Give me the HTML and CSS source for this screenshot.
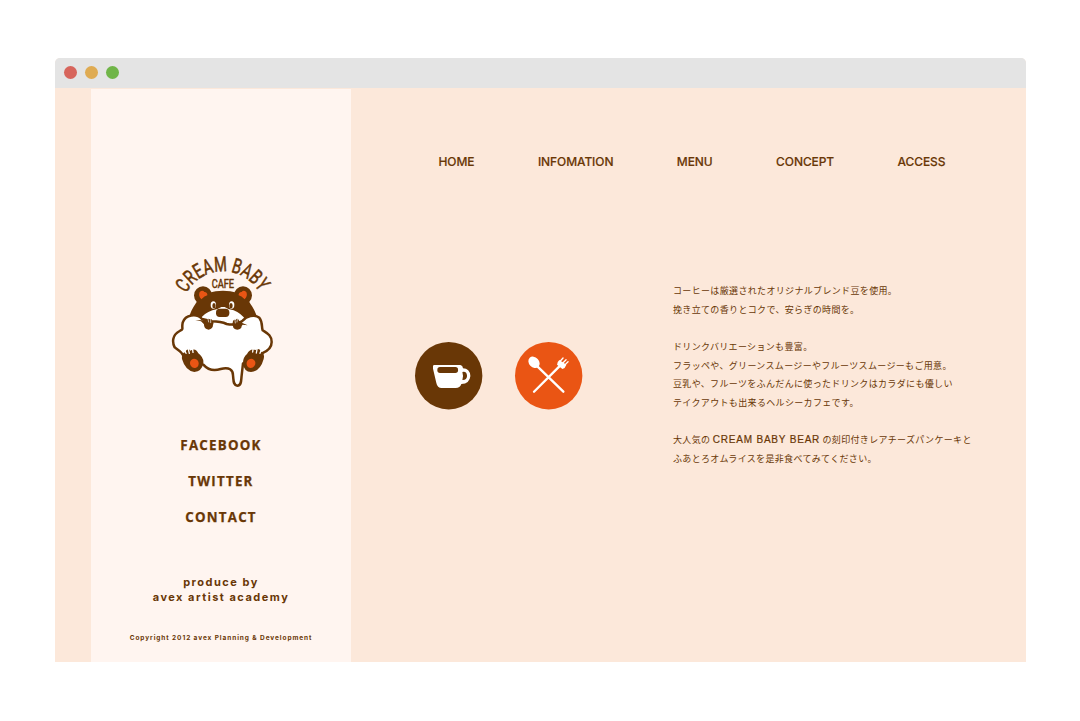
FILE: index.html
```html
<!DOCTYPE html>
<html lang="ja">
<head>
<meta charset="utf-8">
<title>CREAM BABY CAFE</title>
<link rel="stylesheet" href="styles.css">
</head>
<body>
<div class="window">
  <div class="titlebar"><i class="dot red"></i><i class="dot yellow"></i><i class="dot green"></i></div>
  <div class="page">
    <aside class="sidebar">
      <svg class="logo" viewBox="0 0 360 435" role="img" aria-label="CREAM BABY CAFE">
        <defs><path id="arc" d="M73 130A125 125 0 0 1 294 131"/></defs>
        <text class="logo-arc"><textPath href="#arc" textLength="266" lengthAdjust="spacingAndGlyphs">CREAM BABY</textPath></text>
        <text class="logo-cafe" x="149" y="115" textLength="67" lengthAdjust="spacingAndGlyphs">CAFE</text>
        <g class="brown">
          <circle cx="123" cy="136" r="27"/><circle cx="243" cy="136" r="27"/>
          <path d="M80 210C85 180 98 168 107 151C126 131 153 122 183 122C213 122 240 131 259 151C268 168 281 180 287 210L250 235H110Z"/>
        </g>
        <path class="orange" d="M113 126Q122 118 127 126Q137 127 136 136Q128 138 118 148Q108 138 113 126ZM253 126Q244 118 239 126Q229 127 230 136Q238 138 248 148Q258 138 253 126Z"/>
        <path class="white" d="M112 211Q126 189 151 181Q169 178 178 171H188Q197 178 215 181Q238 190 252 211L230 230H130Z"/>
        <path class="outline white" d="M120 207C104 189 70 194 62 218C58 240 67 235 53 243C29 256 31 278 38 292C52 302 65 310 68 330C82 340 110 340 124 344C139 361 158 363 176 357C202 350 213 360 213 376C215 391 213 406 226 407C239 407 237 391 239 376L243 340C269 331 291 324 300 310C323 301 329 290 329 276C329 255 314 249 302 241C298 233 303 217 292 203C276 191 253 199 242 212C226 227 208 225 194 222C177 214 158 214 149 214Z"/>
        <g class="white"><ellipse cx="154" cy="165" rx="8" ry="11"/><ellipse cx="209" cy="165" rx="8" ry="11"/></g>
        <g class="brown">
          <ellipse cx="156" cy="167" rx="5" ry="8"/><ellipse cx="207" cy="167" rx="5" ry="8"/>
          <rect x="162" y="176" width="40" height="25" rx="11"/>
          <path d="M100 210L122 211Q127 208 133 214Q138 202 144 209Q151 205 151 214Q157 216 153 225Q153 236 140 239Q125 237 126 223L117 214ZM257 226L241 219Q240 210 232 213Q226 201 221 210Q213 207 212 219Q208 224 213 229Q213 238 226 239Q239 238 239 228L242 224Z"/>
          <path d="M60 327Q58 309 69 307Q77 291 85 302Q101 292 109 310Q126 323 124 340Q119 365 97 366Q70 362 60 327ZM305 327Q309 310 299 307Q292 291 281 300Q264 294 255 312Q242 323 243 341Q246 365 267 366Q295 364 305 327Z"/>
        </g>
        <path class="toes" d="M66 297L72 310M78 293L82 310M91 292L93 307M299 296L294 310M286 292L283 309M274 291L272 306"/>
        <path class="toes thin" d="M138 207L140 216M146 209L146 218M226 208L225 216M219 211L220 219"/>
        <ellipse class="orange" cx="97" cy="340" rx="13" ry="14" transform="rotate(-20 97 340)"/>
        <ellipse class="orange" cx="267" cy="340" rx="13" ry="14" transform="rotate(20 267 340)"/>
      </svg>
      <nav class="social"><a>FACEBOOK</a><a>TWITTER</a><a>CONTACT</a></nav>
      <p class="producer">produce by<br>avex artist academy</p>
      <p class="copyright">Copyright 2012 avex Planning &amp; Development</p>
    </aside>
    <main class="content">
      <nav class="mainnav"><a>HOME</a><a>INFOMATION</a><a>MENU</a><a>CONCEPT</a><a>ACCESS</a></nav>
      <div class="concept">
        <div class="icons">
          <svg class="icon" viewBox="0 0 202 202">
            <circle class="brown" cx="101" cy="101" r="101"/>
            <path class="white" d="M56 69H136Q143 70 144 79Q164 79 166 102Q164 125 139 126Q135 138 122 138H80Q67 138 64 123L54 80Q53 70 56 69Z"/>
            <rect class="brown" x="67" y="75" width="62" height="18" rx="8"/>
            <path class="brown" d="M142 90Q155 87 156 102Q155 115 142 114Q146 102 142 90Z"/>
          </svg>
          <svg class="icon" viewBox="0 0 202 202">
            <circle class="orange" cx="101" cy="101" r="101"/>
            <ellipse class="white" cx="57" cy="61" rx="15" ry="19" transform="rotate(-43 57 61)"/>
            <path class="stroke" d="M64 70L145 149M57 149L136 70"/>
            <path class="white" d="M126 68L142 81Q151 78 154 68L133 54Q126 60 126 68Z"/>
            <path class="tines" d="M134 59L144 48M141 65L153 53M148 70L159 59"/>
          </svg>
        </div>
        <div class="copy">
          <p>コーヒーは厳選されたオリジナルブレンド豆を使用。<br>挽き立ての香りとコクで、安らぎの時間を。</p>
          <p>ドリンクバリエーションも豊富。<br>フラッペや、グリーンスムージーやフルーツスムージーもご用意。<br>豆乳や、フルーツをふんだんに使ったドリンクはカラダにも優しい<br>テイクアウトも出来るヘルシーカフェです。</p>
          <p>大人気の <span class="latin">CREAM BABY BEAR</span> の刻印付きレアチーズパンケーキと<br>ふあとろオムライスを是非食べてみてください。</p>
        </div>
      </div>
    </main>
  </div>
</div>
</body>
</html>
```
FILE: styles.css
```css
* { box-sizing: border-box; }
body { margin: 0; background: #fff; color: #693706; padding: 57.5px 54px 59px 54.5px; }
p { margin: 0; }
.window { height: 604.5px; border-radius: 5px 5px 0 0; overflow: hidden; background: #fce8da; }
.titlebar { height: 30.5px; background: #e4e4e4; display: flex; align-items: center; gap: 8px; padding-left: 9.5px; }
.dot { width: 13px; height: 13px; border-radius: 50%; }
.red { background: #d7655c; }
.yellow { background: #dfab52; }
.green { background: #70b548; }
.page { display: flex; height: 574px; padding: 1px 0 0 36.5px; }
.sidebar { width: 260px; background: #fff5f0; padding-top: 161px; display: flex; flex-direction: column; align-items: center; text-align: center; white-space: nowrap; }
.logo { width: 120px; height: 145px; margin-left: 2px; display: block; }
.logo text { fill: #693706; stroke: #693706; font-family: Roboto, sans-serif; }
.logo-arc { font-size: 62px; stroke-width: 1.6px; }
.logo-cafe { font-size: 40px; stroke-width: 1.6px; }
.brown { fill: #693706; }
.orange { fill: #ea5514; }
.white { fill: #fff; }
.outline { stroke: #693706; stroke-width: 7.5px; stroke-linejoin: round; }
.toes { stroke: #fff; stroke-width: 4px; stroke-linecap: round; }
.thin { stroke-width: 2px; }
.social { margin-top: 32px; display: flex; flex-direction: column; align-items: center; font: bold 13.3px/36px "Open Sans", sans-serif; letter-spacing: 1.25px; -webkit-text-stroke: .25px #693706; }
.producer { margin-top: 40px; font: bold 11px/15px Inter, sans-serif; letter-spacing: 1.5px; }
.copyright { margin-top: 28px; font: bold 6.5px/10px Inter, sans-serif; letter-spacing: .92px; }
.content { flex: 1; padding-top: 63px; }
.mainnav { display: flex; gap: 63.5px; padding-left: 87.5px; font: 500 12px/20px Inter, sans-serif; letter-spacing: -.1px; -webkit-text-stroke: .15px #693706; }
.concept { display: flex; padding: 110px 0 0 64px; }
.icons { display: flex; gap: 33px; padding-top: 60px; width: 258px; }
.icon { width: 67.4px; height: 67.4px; display: block; overflow: visible; }
.stroke { fill: none; stroke: #fff; stroke-width: 7px; stroke-linecap: round; }
.tines { fill: none; stroke: #fff; stroke-width: 4px; stroke-linecap: round; }
.copy { font: 9px/18.65px "Noto Sans CJK JP", sans-serif; letter-spacing: .34px; white-space: nowrap; }
.copy p + p { margin-top: 18.65px; }
.latin { font-family: "Liberation Sans", sans-serif; font-size: 10px; letter-spacing: .8px; line-height: 1; -webkit-text-stroke: .2px #693706; }
```
